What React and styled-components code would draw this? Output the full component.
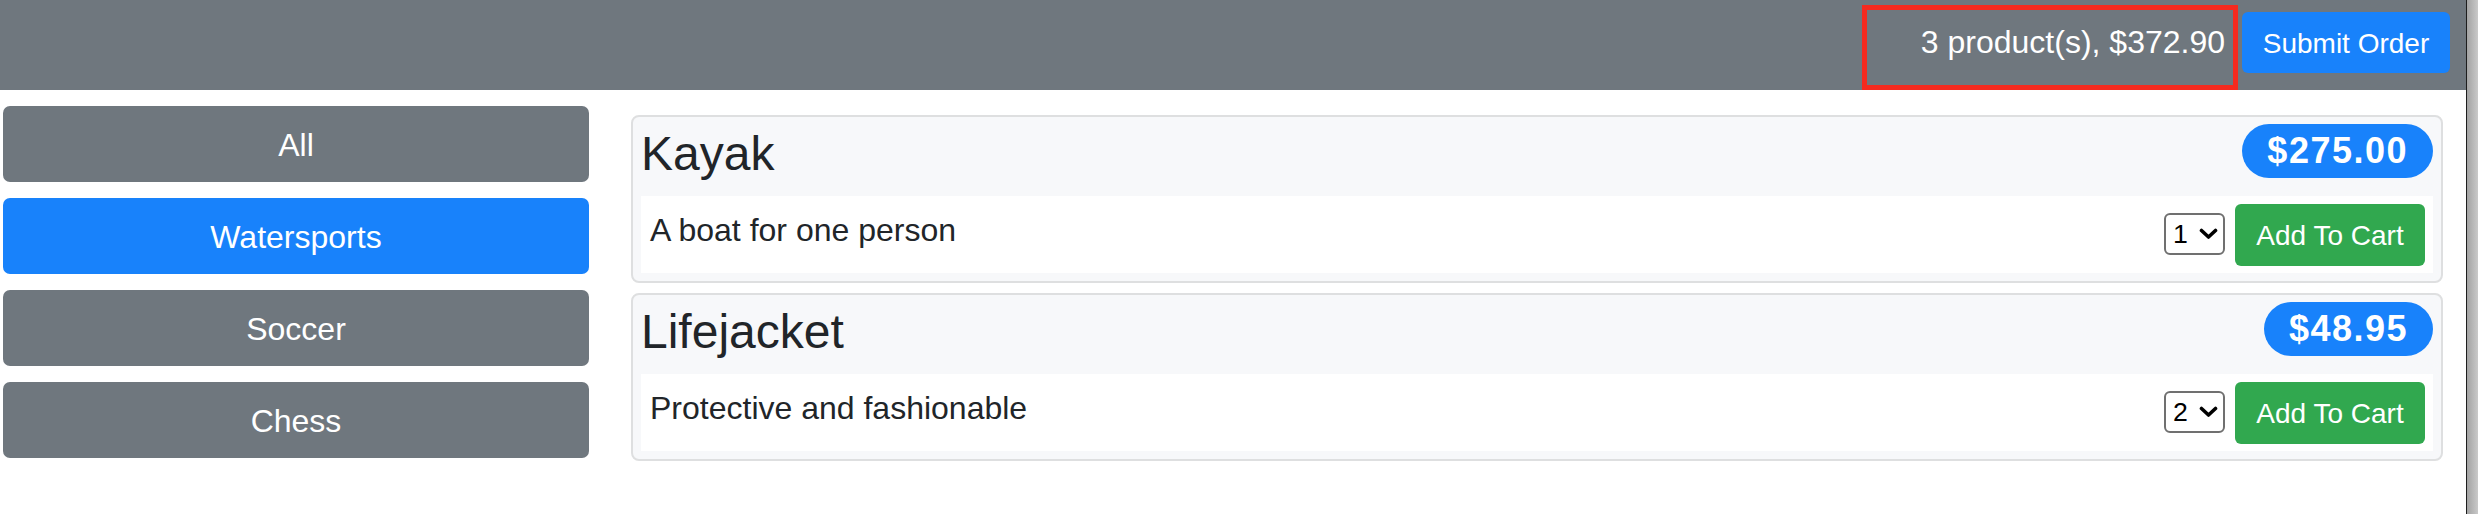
import React, { useState } from 'react'
import styled, { createGlobalStyle } from 'styled-components'

const GlobalStyle = createGlobalStyle`
  html, body {
    margin: 0;
    padding: 0;
    background: white;
  }
  body {
    font-family: "Liberation Sans", Arial, sans-serif;
    color: #212529;
  }
  * {
    box-sizing: border-box;
  }
`;

const Page = styled.div`
  display: flex;
  min-height: 100vh;
`;

const Main = styled.div`
  flex: 1;
`;

const ScrollTrack = styled.div`
  width: 12px;
  border-left: 1px solid #1e1e1e;
  background: linear-gradient(to right, #a3a3a3, #c9c9c9);
`;

const TopBar = styled.header`
  height: 90px;
  background-color: #6f777e;
  display: flex;
  justify-content: flex-end;
  align-items: flex-start;
  padding: 5px 16px 0 0;
`;

const CartSummary = styled.span`
  width: 376px;
  height: 85px;
  border: 5px solid #f52a1f;
  padding: 8px 8px 0 0;
  text-align: right;
  color: white;
  font-size: 32px;
  line-height: 48px;
`;

const SubmitButton = styled.button`
  margin: 7px 0 0 4px;
  width: 208px;
  height: 61px;
  padding: 2px 0 0;
  border: none;
  border-radius: 6px;
  background-color: #1882fb;
  color: white;
  font-family: inherit;
  font-size: 28px;
`;

const Content = styled.div`
  display: grid;
  grid-template-columns: 586px 1fr;
  gap: 42px;
  padding: 16px 23px 0 3px;
`;

const CategoryList = styled.nav`
  display: flex;
  flex-direction: column;
  gap: 16px;
`;

const CategoryButton = styled.button`
  width: 100%;
  height: 76px;
  padding-top: 3px;
  border: none;
  border-radius: 7px;
  background-color: ${p => (p.$active ? '#1882fb' : '#6f777e')};
  color: white;
  font-family: inherit;
  font-size: 32px;
`;

const ProductList = styled.div`
  display: flex;
  flex-direction: column;
  gap: 10px;
  margin-top: 9px;
`;

const Card = styled.div`
  border: 2px solid #dedfe0;
  border-radius: 8px;
  background-color: #f7f8fa;
  padding: 8px;
`;

const CardHeader = styled.div`
  height: 71px;
  display: flex;
  justify-content: space-between;
  align-items: flex-start;
`;

const Title = styled.h4`
  margin: 0;
  font-size: 48px;
  font-weight: 500;
  line-height: 57.6px;
`;

const PriceBadge = styled.span`
  margin-top: -1px;
  padding: 9px 25px;
  border-radius: 999px;
  background-color: #1882fb;
  color: white;
  font-size: 36px;
  font-weight: 700;
  line-height: 1;
  letter-spacing: 1.5px;
`;

const CardBody = styled.div`
  background-color: white;
  padding: 8px 8px 7px;
  display: flex;
  justify-content: space-between;
  align-items: flex-start;
`;

const Description = styled.span`
  padding: 2px 0 0 1px;
  font-size: 32px;
  line-height: 48px;
`;

const Controls = styled.div`
  display: flex;
  align-items: center;
  gap: 10px;
`;

const QtyBox = styled.div`
  position: relative;
  margin-top: -3px;
`;

const QtySelect = styled.select`
  appearance: none;
  width: 61px;
  height: 42px;
  padding: 1px 0 0 7px;
  border: 2px solid #707070;
  border-radius: 6px;
  background: white;
  color: black;
  font-family: "Liberation Sans", Arial, sans-serif;
  font-size: 26.67px;
`;

const Chevron = styled.svg`
  position: absolute;
  right: 7px;
  top: 15px;
  pointer-events: none;
`;

const AddButton = styled.button`
  width: 190px;
  height: 62px;
  padding: 2px 0 0;
  border: none;
  border-radius: 6px;
  background-color: #31a84f;
  color: white;
  font-family: inherit;
  font-size: 28px;
`;

const categories = ['All', 'Watersports', 'Soccer', 'Chess'];

const products = [
  { name: 'Kayak', price: 275, description: 'A boat for one person', qty: 1 },
  { name: 'Lifejacket', price: 48.95, description: 'Protective and fashionable', qty: 2 },
];

function ProductCard({ product }) {
  let [qty, setQty] = useState(product.qty);
  return (
    <Card>
      <CardHeader>
        <Title>{product.name}</Title>
        <PriceBadge>${product.price.toFixed(2)}</PriceBadge>
      </CardHeader>
      <CardBody>
        <Description>{product.description}</Description>
        <Controls>
          <QtyBox>
            <QtySelect value={qty} onChange={e => setQty(Number(e.target.value))}>
              {[1, 2, 3, 4].map(n => <option key={n} value={n}>{n}</option>)}
            </QtySelect>
            <Chevron width="19" height="12" viewBox="0 0 19 12">
              <path d="M2.5 2.5 L9.5 9 L16.5 2.5" fill="none" stroke="black" strokeWidth="3.6" strokeLinecap="round" strokeLinejoin="round" />
            </Chevron>
          </QtyBox>
          <AddButton>Add To Cart</AddButton>
        </Controls>
      </CardBody>
    </Card>
  )
}

export default function App() {
  let [selected, setSelected] = useState('Watersports');
  return (
    <Page>
      <GlobalStyle />
      <Main>
        <TopBar>
          <CartSummary>3 product(s), $372.90</CartSummary>
          <SubmitButton>Submit Order</SubmitButton>
        </TopBar>
        <Content>
          <CategoryList>
            {categories.map(c => (
              <CategoryButton key={c} $active={c === selected} onClick={() => setSelected(c)}>{c}</CategoryButton>
            ))}
          </CategoryList>
          <ProductList>
            {products.map(p => <ProductCard key={p.name} product={p} />)}
          </ProductList>
        </Content>
      </Main>
      <ScrollTrack />
    </Page>
  )
}
